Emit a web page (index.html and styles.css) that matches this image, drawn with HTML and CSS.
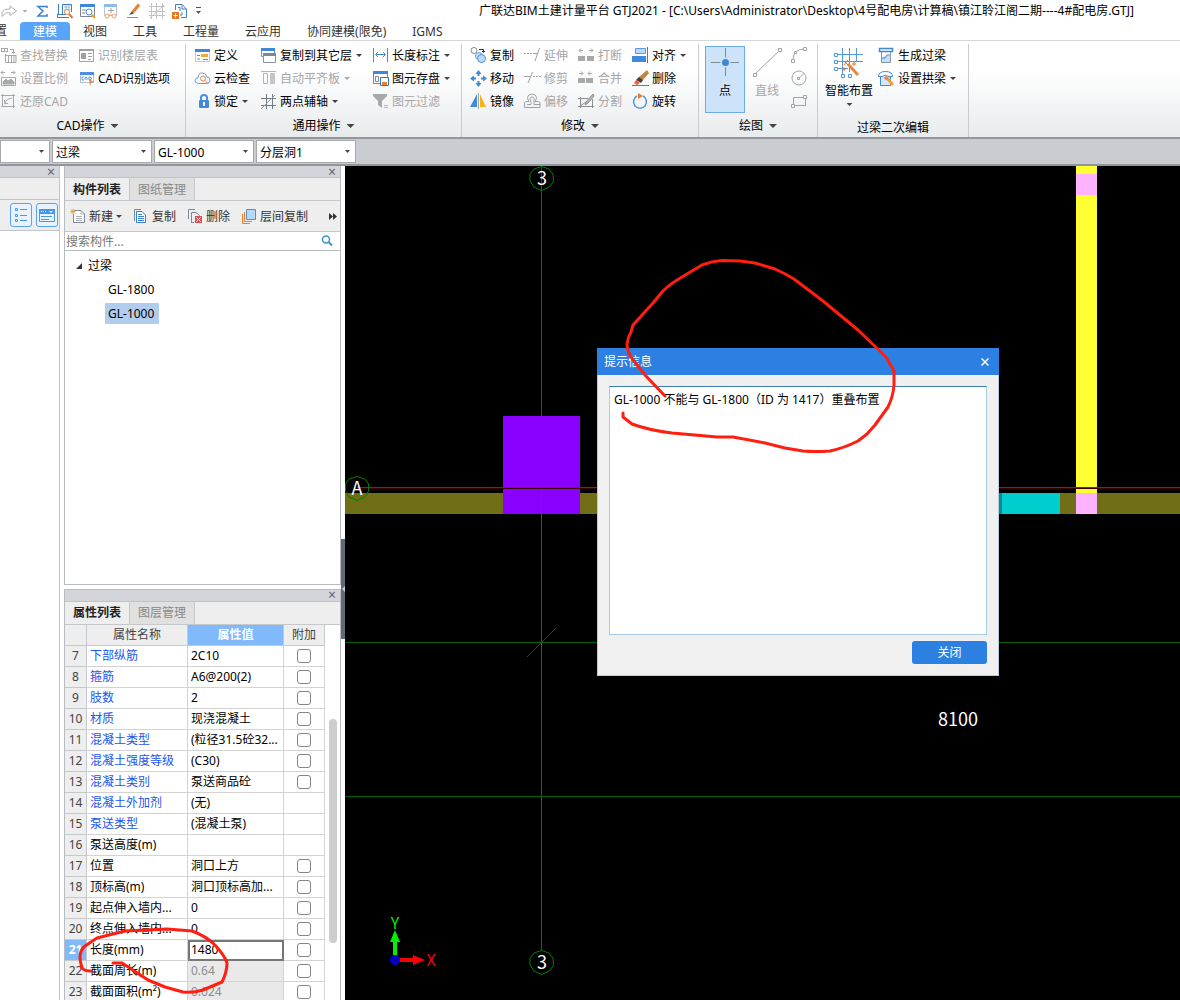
FILE: index.html
```
<!DOCTYPE html>
<html lang="zh-CN">
<head>
    <meta charset="UTF-8">
    <meta name="viewport" content="width=device-width, initial-scale=1.0">
    <title>广联达BIM土建计量平台 GTJ2021</title>
    <link rel="stylesheet" href="styles.css">
</head>
<body>
    <header class="titlebar">
        <div class="quick">
            <button aria-label="重做"><svg width="16" height="16" viewBox="0 0 16 16" fill="none" stroke="#b0b0b0"><path d="M1 13.500V10Q2 6 9 6V3L15.500 8L9 12.500V9.500Q4 9 1 13.500Z"/></svg></button>
            <button aria-label="更多"><span class="arrow light"></span></button>
            <button class="sigma" aria-label="汇总计算"><svg width="16" height="16" viewBox="0 0 16 16" fill="none" stroke="#3b82d4" stroke-width="1.500"><path d="M13 5V3.500H4L9 8L4 13H13V11"/></svg></button>
            <button aria-label="查看工程量"><svg width="16" height="16" viewBox="0 0 16 16" fill="none" stroke="#3b7fcc"><path d="M1.500 1V11H0.500V14.500H12M5.500 11V1.500H14.500V9M1 11.500H9"/><path d="M7 4H13M7 7H13M9 2V9M12 2V7" stroke="#9bb8d8"/><circle cx="10" cy="9" r="2.500" fill="#fff" stroke="#e58b4a"/><path d="M12 11L15.500 15" stroke="#d9783c" stroke-width="2"/></svg></button>
            <button aria-label="查看计算式"><svg width="16" height="16" viewBox="0 0 16 16" fill="none"><path d="M0.500 1.500H14.500V13.500H0.500Z" fill="#fff" stroke="#7b8794"/><path d="M0 1H15V4H0Z" fill="#3f87d9"/><path d="M2 7H6M2 10H5" stroke="#7b8794"/><circle cx="9" cy="9" r="3" fill="#fff" stroke="#4a8fdb"/><path d="M11.500 11.500L15 15" stroke="#f0a030" stroke-width="2"/></svg></button>
            <button aria-label="查看三维"><svg width="16" height="16" viewBox="0 0 16 16" fill="none"><path d="M1.500 1.500H13.500V12.500H1.500Z" fill="#fff" stroke="#b7c3d0"/><path d="M1 1H14V4H1Z" fill="#8fbbe8"/><path d="M5 7.500H11M8 5V10" stroke="#9aa5b1"/><circle cx="4" cy="13" r="2" fill="#fff" stroke="#f0a070"/><circle cx="11" cy="13" r="2" fill="#fff" stroke="#f0a070"/><path d="M6 12H9" stroke="#f0a070"/></svg></button>
            <button aria-label="画笔"><svg width="16" height="16" viewBox="0 0 16 16" fill="none"><path d="M13 1.500L7 9" stroke="#ee7d2e" stroke-width="3"/><path d="M6 8L3 12L8 10.500Z" fill="#555"/><path d="M1 14.500H12" stroke="#8a8f95"/></svg></button>
            <button aria-label="网格"><svg width="16" height="16" viewBox="0 0 16 16" fill="none" stroke="#c2c2c2"><path d="M0 3.500H16M0 8.500H16M0 12.500H16M2.500 0V16M7.500 0V16M13.500 0V16M1 15L15 2"/></svg></button>
            <button aria-label="导入"><svg width="16" height="16" viewBox="0 0 16 16" fill="none"><path d="M3.500 7V1.500H10L14.500 6V14.500H9" stroke="#3f7fc8"/><path d="M10 1.500V6H14" stroke="#3f7fc8"/><path d="M6 4.500H8V8M10 9V12H8" stroke="#3f7fc8"/><path d="M0 9H7V16H0Z" fill="#ed7422"/><path d="M3.500 10.500V14.500M1.500 12.500H5.500" stroke="#fff"/></svg></button>
            <button aria-label="自定义"><svg width="8" height="8" viewBox="0 0 8 8"><path d="M1 0.500H6" stroke="#555"/><path d="M1 4H6L3.500 7Z" fill="#555"/></svg></button>
        </div>
        <h1>广联达BIM土建计量平台 GTJ2021 - [C:\Users\Administrator\Desktop\4号配电房\计算稿\镇江聆江阁二期----4#配电房.GTJ]</h1>
    </header>

    <nav class="tabs">
        <button class="cut">置</button>
        <button class="active">建模</button>
        <button>视图</button>
        <button>工具</button>
        <button>工程量</button>
        <button>云应用</button>
        <button>协同建模(限免)</button>
        <button>IGMS</button>
    </nav>

    <section class="ribbon">
        <div class="group group-cad">
            <div class="tools">
                <div class="col">
                    <button disabled><svg class="icon" viewBox="0 0 17 17" fill="none" stroke="#a8a8a8"><path d="M1 1.500H8M1 4.500H8M1.500 1V5M4.500 1V5M7.500 1V5M10 2.500H13.500V6M12 5L13.500 6.500L15 5M5.500 8.500H16M5.500 7V15.500H16V7.500M8.500 8V15M11.500 8V15M14 8V15"/></svg>查找替换</button>
                    <button disabled><svg class="icon" viewBox="0 0 17 17" fill="none" stroke="#a8a8a8"><path d="M1 2.500H5M3 0.500L1 2.500L3 4.500M11 2.500H15M13 0.500L15 2.500L13 4.500M1.500 7.500H15.500V15.500H1.500Z"/><path d="M3 14V12L6 9L8 11L11 9L14 12V14Z" fill="#a8a8a8"/></svg>设置比例</button>
                    <button disabled><svg class="icon" viewBox="0 0 17 17" fill="none" stroke="#a8a8a8"><path d="M1 2.500H15M2.500 1V14M1 13.500H15M13.500 1V15M5 10Q6 6 12 5M4.500 7V10.500H8"/></svg>还原CAD</button>
                </div>
                <div class="col">
                    <button disabled><svg class="icon" viewBox="0 0 17 17" fill="none" stroke="#a0a0a0"><path d="M1.500 2.500H15.500V14.500H1.500Z"/><path d="M1 2H16V4H1ZM3 6H8V12H3Z" fill="#a0a0a0" stroke="none"/><path d="M10 6.500H14M10 9.500H14M10 12.500H13"/></svg>识别楼层表</button>
                    <button><svg class="icon" viewBox="0 0 17 17" fill="none"><path d="M2.500 2.500H15.500V12.500H2.500Z" fill="#fff" stroke="#b3bfcc"/><path d="M2 2H16V5H2Z" fill="#4a90e2"/><path d="M6 7H4V10H6M7 10V8L8 7L9 8V10M11 7V10H12L14 8.500L12 7Z" stroke="#5a9be0"/><path d="M11 9L16 12L13 13L12 16Z" fill="#ee8258"/></svg>CAD识别选项</button>
                </div>
            </div>
            <button class="label">CAD操作<span class="arrow big"></span></button>
        </div>

        <div class="group group-common">
            <div class="tools">
                <div class="col">
                    <button><svg class="icon" viewBox="0 0 17 17" fill="none"><path d="M1.500 2.500H15.500V14.500H1.500Z" fill="#fff" stroke="#c4c8cd"/><path d="M1 2H16V5H1Z" fill="#3f87d9"/><path d="M3 8.500H6M3 12H6M9 12.500H14" stroke="#7d8790"/><path d="M7 7H14V10H7Z" fill="#f5a83c"/></svg>定义</button>
                    <button><svg class="icon" viewBox="0 0 17 17" fill="none" stroke="#5d9fe6"><path d="M4.500 13.500Q1 13 1 10.500Q1 8 4 8Q4 3 8.500 3Q12 3 13 7Q16 7 16 10.500Q16 13.500 12 13.500Z"/><circle cx="9" cy="8.500" r="2.500" stroke="#e88a50"/><path d="M11 10.500L14 14" stroke="#e88a50"/></svg>云检查</button>
                    <button><svg class="icon" viewBox="0 0 17 17" fill="none"><path d="M7 8V4.500Q7 2 10 2T13 4.500V8" stroke="#4a90e2" stroke-width="2"/><rect x="5" y="7" width="10" height="8" rx="1" fill="#4189dd"/><path d="M10 9V13" stroke="#fff" stroke-width="2"/></svg>锁定<span class="arrow"></span></button>
                </div>
                <div class="col">
                    <button><svg class="icon" viewBox="0 0 17 17" fill="none"><path d="M1.500 1.500H14.500V9.500H1.500Z" fill="#fff" stroke="#5b97dc"/><path d="M1 1H15V4H1Z" fill="#3f87d9"/><path d="M3.500 6.500H15.500V15.500H3.500Z" fill="#fff" stroke="#87939e"/><path d="M3 6H16V9H3Z" fill="#7c8994"/></svg>复制到其它层<span class="arrow"></span></button>
                    <button disabled><svg class="icon" viewBox="0 0 17 17" fill="none" stroke="#b5b5b5"><path d="M1 1.500H16M3.500 3.500H7.500V13.500H3.500Z"/><path d="M10 3H15V14H10Z" fill="#c6c6c6" stroke="none"/></svg>自动平齐板<span class="arrow light"></span></button>
                    <button><svg class="icon" viewBox="0 0 17 17" fill="none" stroke="#6f7a84"><path d="M6.500 1V16M12.500 1V16M1 5.500H16M1 12.500H16"/><path d="M1 16L15 2" stroke="#ed8540"/></svg>两点辅轴<span class="arrow"></span></button>
                </div>
                <div class="col">
                    <button><svg class="icon" viewBox="0 0 17 17" fill="none"><path d="M1.500 1V15M15.500 1V15" stroke="#74808b"/><path d="M4 7.500H13M6 5L3.500 7.500L6 10M11 5L13.500 7.500L11 10" stroke="#3f87d9"/></svg>长度标注<span class="arrow"></span></button>
                    <button><svg class="icon" viewBox="0 0 17 17" fill="none"><path d="M1.500 2.500H15.500V13.500H1.500Z" fill="#fff" stroke="#78848e"/><path d="M1 1H16V4H1Z" fill="#3f87d9"/><path d="M3.500 6.500H6.500V11.500H3.500Z" stroke="#7c8994"/><path d="M8.500 7.500H16.500V15.500H8.500Z" fill="#fff" stroke="#2f78ca"/><path d="M10 12H15V15H10Z" fill="#ed7c31"/></svg>图元存盘<span class="arrow"></span></button>
                    <button disabled><svg class="icon" viewBox="0 0 17 17"><path d="M1 1H15V3L10 8V15L6 12V8L1 3Z" fill="#a8a8a8"/><path d="M12 12.500H16M12 14.500H16" stroke="#b8b8b8"/></svg>图元过滤</button>
                </div>
            </div>
            <button class="label">通用操作<span class="arrow big"></span></button>
        </div>

        <div class="group group-edit">
            <div class="tools">
                <div class="col">
                    <button><svg class="icon" viewBox="0 0 17 17" fill="none"><circle cx="4" cy="3.500" r="3" stroke="#7c8790"/><path d="M9 2.500H13.500V5M12 4L13.500 5.500L15 4" stroke="#333"/><circle cx="9" cy="9" r="3.500" fill="#cfe6fb" stroke="#6f9dc8"/><circle cx="11.500" cy="11.500" r="4" fill="#b9dcfa" stroke="#4a90d6"/></svg>复制</button>
                    <button><svg class="icon" viewBox="0 0 17 17" fill="#3f87d9"><path d="M8.500 0L11.500 4H9.500V6H7.500V4H5.500ZM8.500 17L11.500 13H9.500V11H7.500V13H5.500ZM0 8.500L4 5.500V7.500H6V9.500H4V11.500ZM17 8.500L13 5.500V7.500H11V9.500H13V11.500Z"/></svg>移动</button>
                    <button><svg class="icon" viewBox="0 0 17 17"><path d="M7 1V14H0Z" fill="#4189dd"/><path d="M10 1V14H16Z" fill="#f9b21c"/><path d="M8.500 0V16" stroke="#9ba5ae"/></svg>镜像</button>
                </div>
                <div class="col">
                    <button disabled><svg class="icon" viewBox="0 0 17 17" fill="none" stroke="#a0a0a0"><path d="M0 6.500H10" stroke-dasharray="2 1"/><path d="M15.500 1L11 14M10 6.500H13"/></svg>延伸</button>
                    <button disabled><svg class="icon" viewBox="0 0 17 17" fill="none" stroke="#a0a0a0"><path d="M9 6.500H17" stroke-dasharray="2 1"/><path d="M8.500 2L4 13M0 6.500H6"/></svg>修剪</button>
                    <button disabled><svg class="icon" viewBox="0 0 17 17" fill="none" stroke="#a0a0a0"><path d="M0.500 14.500V9.500Q1 8.500 5 8.500Q3.500 6 3.500 4.500Q4 1 8 1T12.500 4.500Q12.500 6 11 8.500Q16 8 16 10V14.500ZM3 11.500H7V9Q6 7 6 5.500Q6.500 4 8 4T10 5.500V11.500H16"/></svg>偏移</button>
                </div>
                <div class="col">
                    <button disabled><svg class="icon" viewBox="0 0 17 17" fill="none" stroke="#a8a8a8"><path d="M1 3.500H5M3 1.500L1 3.500L3 5.500M11 3.500H15M13 1.500L15 3.500L13 5.500"/><path d="M0 9H7V14H0ZM9 9H16V14H9Z" fill="#a8a8a8" stroke="none"/></svg>打断</button>
                    <button disabled><svg class="icon" viewBox="0 0 17 17" fill="none" stroke="#a8a8a8"><path d="M1 3.500H5M3 1.500L5 3.500L3 5.500M10 3.500H14M12 1.500L10 3.500L12 5.500"/><path d="M0 8H7V13H0ZM8 8H15V13H8Z" fill="#a8a8a8" stroke="none"/></svg>合并</button>
                    <button disabled><svg class="icon" viewBox="0 0 17 17" fill="none" stroke="#909090"><path d="M0 5.500H10M2.500 4V15M0 13.500H16M14.500 6V15M2 13L8 9"/><path d="M15 1L8 9L7 12L10 10L16 3Z" fill="#b5b5b5"/></svg>分割</button>
                </div>
                <div class="col">
                    <button><svg class="icon" viewBox="0 0 17 17" fill="none"><path d="M3.500 1.500H13.500V6.500H3.500Z" fill="#b9dafb" stroke="#5a9ae0"/><path d="M0 9H14V15H0Z" fill="#4189dd"/><path d="M15.500 0V16" stroke="#68737e"/></svg>对齐<span class="arrow"></span></button>
                    <button><svg class="icon" viewBox="0 0 17 17"><path d="M15 0L17 3L10 11L6 8Z" fill="#c78342"/><path d="M7 7L11 10L9 13L4 10Z" fill="#4c4039"/><path d="M4 10L8 13L5 15L2 13Z" fill="#e8643c"/><path d="M0 15.500H17" stroke="#777"/></svg>删除</button>
                    <button><svg class="icon" viewBox="0 0 17 17" fill="none"><path d="M11 3A6.500 6.500 0 1 1 5 3" stroke="#4f94e0" stroke-width="1.500"/><path d="M6 0L11 3L6 6Z" fill="#ee7a31"/></svg>旋转</button>
                </div>
            </div>
            <button class="label">修改<span class="arrow big"></span></button>
        </div>

        <div class="group group-draw">
            <div class="tools">
                <button class="large selected"><svg width="30" height="32" viewBox="0 0 30 32"><path d="M15.500 1V29M1 15.500H29" stroke="#7f8a94"/><circle cx="15.500" cy="15.500" r="5" fill="#cde4fa"/><circle cx="15.500" cy="15.500" r="3.500" fill="#3f87d9"/></svg>点</button>
                <button class="large" disabled><svg width="30" height="32" viewBox="0 0 30 32" fill="none" stroke="#a3a3a3"><path d="M4 26L26 5"/><path d="M1.500 26.500H4.500V29.500H1.500ZM26.500 1.500H29.500V4.500H26.500Z"/></svg>直线</button>
                <div class="col">
                    <button disabled aria-label="圆弧"><svg class="icon" viewBox="0 0 17 17" fill="none" stroke="#a3a3a3"><path d="M2 13Q2 2 14 2"/><path d="M0.500 12.500H3.500V15.500H0.500ZM12.500 0.500H15.500V3.500H12.500ZM3.500 4.500H5.500V6.500H3.500Z" fill="#fff"/></svg></button>
                    <button disabled aria-label="圆"><svg class="icon" viewBox="0 0 17 17" fill="none" stroke="#a3a3a3"><circle cx="8" cy="8" r="7"/><path d="M6.500 7.500H8.500V9.500H6.500ZM9 7.500L12.500 4"/></svg></button>
                    <button disabled aria-label="矩形"><svg class="icon" viewBox="0 0 17 17" fill="none" stroke="#a3a3a3"><path d="M2.500 4.500H14.500V12.500H2.500Z"/><path d="M0.500 11.500H3.500V14.500H0.500ZM12.500 2.500H15.500V5.500H12.500Z" fill="#fff"/></svg></button>
                </div>
            </div>
            <button class="label">绘图<span class="arrow big"></span></button>
        </div>

        <div class="group group-lintel">
            <div class="tools">
                <button class="large"><svg width="30" height="32" viewBox="0 0 30 32" fill="none" stroke="#5297e2"><path d="M8.500 1V27M15.500 1V25M22.500 1V14M3 7.500H29M3 14.500H29M3 21.500H14"/><path d="M0.500 6.500H3.500V9.500H0.500ZM0.500 13.500H3.500V16.500H0.500ZM0.500 20.500H3.500V23.500H0.500ZM7.500 27.500H10.500V30.500H7.500ZM14.500 27.500H17.500V30.500H14.500Z" fill="#fff"/><path d="M14 17L24 28" stroke="#de8b4a" stroke-width="3"/><path d="M10 14L14 18M14 13L10 18M8 22H12M10 20V24M18 17H22M20 15V19" stroke="#ef6f2c"/></svg>智能布置<span class="arrow"></span></button>
                <div class="col">
                    <button><svg class="icon" viewBox="0 0 17 17" fill="none"><path d="M3.500 4V15.500H12.500V4" fill="#fff" stroke="#8b97a2"/><path d="M4 11Q8 7 12 9V15H4Z" fill="#c4dffa"/><path d="M1.500 1.500H14.500V4.500H1.500Z" fill="#fff" stroke="#3f87d9" stroke-width="1.500"/><path d="M4 11H7L9 8H12" stroke="#3f87d9"/></svg>生成过梁</button>
                    <button><svg class="icon" viewBox="0 0 17 17" fill="none"><path d="M2.500 7V15.500H12.500V7" fill="#d5e8fb" stroke="#3f87d9"/><path d="M0.500 6.500Q0.500 1.500 7.500 1.500T14.500 6.500H11Q7.500 4 4 6.500Z" fill="#fff" stroke="#3f87d9"/><path d="M9 8L15 15" stroke="#eea13d" stroke-width="3"/><path d="M6 8H10M8 6V10" stroke="#e85f2a"/></svg>设置拱梁<span class="arrow"></span></button>
                </div>
            </div>
            <div class="label">过梁二次编辑</div>
        </div>
    </section>

    <section class="selectors">
        <div class="combo combo-first"><select aria-label="楼层"><option></option></select></div>
        <div class="combo"><select aria-label="构件类型"><option>过梁</option></select></div>
        <div class="combo"><select aria-label="构件"><option>GL-1000</option></select></div>
        <div class="combo"><select aria-label="分层"><option>分层洞1</option></select></div>
    </section>

    <main class="workspace">
        <aside class="side-left">
            <div class="strip"><button class="close" aria-label="关闭">×</button></div>
            <div class="side-head"></div>
            <div class="view-modes">
                <button aria-label="列表"><svg width="14" height="16" viewBox="0 0 14 16" fill="none" stroke="#4496ee"><path d="M1.500 1.500H3.500V3.500H1.500ZM1.500 7.500H3.500V9.500H1.500ZM1.500 12.500H3.500V14.500H1.500ZM6 2.500H13M6 8.500H13M6 13.500H13"/></svg></button>
                <button aria-label="卡片"><svg width="16" height="16" viewBox="0 0 16 16" fill="none"><path d="M0.500 2.500H15.500V14.500H0.500Z" stroke="#4496ee"/><path d="M0 2H16V7H0Z" fill="#4496ee"/><path d="M2 4.500H8" stroke="#fff" stroke-dasharray="1 1"/><path d="M10 4H14L12 6Z" fill="#fff"/><path d="M2 9.500H13M2 12.500H10" stroke="#4496ee"/></svg></button>
            </div>
        </aside>

        <div class="docks">
            <section class="panel panel-components">
                <div class="strip"><button class="close" aria-label="关闭">×</button></div>
                <div class="panel-tabs">
                    <button class="active">构件列表</button>
                    <button>图纸管理</button>
                </div>
                <div class="toolbar">
                    <button><svg class="icon" viewBox="0 0 17 17" fill="none"><path d="M4.500 2.500H11L14.500 6V14.500H3.500V6" fill="#fff" stroke="#7d8994"/><path d="M11 2.500V6H14M6 8.500H12M6 10.500H12M6 12.500H12" stroke="#a9b2ba"/><path d="M3 1V6M0.500 3.500H5.500M1 1.500L5 5.500M5 1.500L1 5.500" stroke="#f0a024"/></svg>新建<span class="arrow"></span></button>
                    <button><svg class="icon" viewBox="0 0 17 17" fill="none"><path d="M1.500 13V1.500H8" stroke="#7d8994"/><path d="M3.500 3.500H9L12.500 7V14.500H3.500Z" fill="#fff" stroke="#3a7fcc"/><path d="M5 6.500H9M5 8.500H11M5 10.500H11M5 12.500H11" stroke="#3a7fcc"/></svg>复制</button>
                    <button><svg class="icon" viewBox="0 0 17 17" fill="none"><path d="M1.500 11V1.500H8M4.500 14.500V4.500H9L12.500 7.500V8M4 14.500H7" stroke="#7d8994"/><path d="M8 8H15V15H8Z" fill="#d8505a"/><path d="M9.500 9.500L13.500 13.500M13.500 9.500L9.500 13.500" stroke="#fff"/></svg>删除</button>
                    <button><svg class="icon" viewBox="0 0 17 17" fill="none"><path d="M1.500 6V15.500H9M3.500 4V13.500H11" stroke="#ed7b30"/><path d="M5.500 1.500H14.500V11.500H5.500Z" fill="#b9d9fa" stroke="#4a90dd"/></svg>层间复制</button>
                    <button class="more" aria-label="更多"><svg width="8" height="7" viewBox="0 0 8 7" fill="#333"><path d="M0 0L4 3.500L0 7ZM4 0L8 3.500L4 7Z"/></svg></button>
                </div>
                <div class="search">
                    <input type="text" aria-label="搜索构件" placeholder="搜索构件...">
                    <svg width="12" height="12" viewBox="0 0 12 12" fill="none" stroke="#3c92c8"><circle cx="5" cy="4.500" r="3.500" stroke-width="1.500"/><path d="M7.500 7L11 10.500" stroke-width="2"/></svg>
                </div>
                <ul class="tree">
                    <li><svg width="8" height="8" viewBox="0 0 8 8"><path d="M7 1V7H1Z" fill="#333"/></svg>过梁
                        <ul>
                            <li><span>GL-1800</span></li>
                            <li><span class="selected">GL-1000</span></li>
                        </ul>
                    </li>
                </ul>
            </section>

            <section class="panel panel-props">
                <div class="strip"><button class="close" aria-label="关闭">×</button></div>
                <div class="panel-tabs">
                    <button class="active">属性列表</button>
                    <button>图层管理</button>
                </div>
                <div class="props">
                    <table>
                        <thead>
                            <tr><th class="num"></th><th class="name">属性名称</th><th class="value current">属性值</th><th class="extra">附加</th></tr>
                        </thead>
                        <tbody>
                            <tr><th>7</th><td class="blue">下部纵筋</td><td>2C10</td><td class="check"><input type="checkbox" aria-label="附加 下部纵筋"></td></tr>
                            <tr><th>8</th><td class="blue">箍筋</td><td>A6@200(2)</td><td class="check"><input type="checkbox" aria-label="附加 箍筋"></td></tr>
                            <tr><th>9</th><td class="blue">肢数</td><td>2</td><td class="check"><input type="checkbox" aria-label="附加 肢数"></td></tr>
                            <tr><th>10</th><td class="blue">材质</td><td>现浇混凝土</td><td class="check"><input type="checkbox" aria-label="附加 材质"></td></tr>
                            <tr><th>11</th><td class="blue">混凝土类型</td><td>(粒径31.5砼32...</td><td class="check"><input type="checkbox" aria-label="附加 混凝土类型"></td></tr>
                            <tr><th>12</th><td class="blue">混凝土强度等级</td><td>(C30)</td><td class="check"><input type="checkbox" aria-label="附加 混凝土强度等级"></td></tr>
                            <tr><th>13</th><td class="blue">混凝土类别</td><td>泵送商品砼</td><td class="check"><input type="checkbox" aria-label="附加 混凝土类别"></td></tr>
                            <tr><th>14</th><td class="blue">混凝土外加剂</td><td>(无)</td><td></td></tr>
                            <tr><th>15</th><td class="blue">泵送类型</td><td>(混凝土泵)</td><td></td></tr>
                            <tr><th>16</th><td>泵送高度(m)</td><td></td><td></td></tr>
                            <tr><th>17</th><td>位置</td><td>洞口上方</td><td class="check"><input type="checkbox" aria-label="附加 位置"></td></tr>
                            <tr><th>18</th><td>顶标高(m)</td><td>洞口顶标高加...</td><td class="check"><input type="checkbox" aria-label="附加 顶标高"></td></tr>
                            <tr><th>19</th><td>起点伸入墙内...</td><td>0</td><td class="check"><input type="checkbox" aria-label="附加 起点伸入墙内"></td></tr>
                            <tr><th>20</th><td>终点伸入墙内...</td><td>0</td><td class="check"><input type="checkbox" aria-label="附加 终点伸入墙内"></td></tr>
                            <tr><th class="current">21</th><td>长度(mm)</td><td class="editing">1480</td><td class="check"><input type="checkbox" aria-label="附加 长度"></td></tr>
                            <tr><th>22</th><td>截面周长(m)</td><td class="readonly">0.64</td><td class="check"><input type="checkbox" aria-label="附加 截面周长"></td></tr>
                            <tr><th>23</th><td>截面面积(m²)</td><td class="readonly">0.024</td><td class="check"><input type="checkbox" aria-label="附加 截面面积"></td></tr>
                        </tbody>
                    </table>
                    <div class="scrollbar"><div class="thumb"></div></div>
                </div>
            </section>
        </div>

        <div class="splitter">
            <button aria-label="折叠"><svg width="3" height="6" viewBox="0 0 3 6"><path d="M3 0V6L0 3Z" fill="#c3c9cf"/></svg></button>
        </div>

        <div class="canvas">
            <svg class="drawing" width="100%" height="100%">
                <!-- walls, columns and openings -->
                <g shape-rendering="crispEdges">
                    <rect x="0" y="327" width="100%" height="21" fill="#706f17"/>
                    <rect x="650" y="327" width="65" height="21" fill="#008f8f"/>
                    <rect x="657" y="327" width="58" height="21" fill="#00cdcd"/>
                    <rect x="731" y="0" width="21" height="327" fill="#ffff33"/>
                    <rect x="731" y="8" width="21" height="21" fill="#ffb3ff"/>
                    <rect x="731" y="327" width="21" height="21" fill="#ffb3ff"/>
                    <rect x="158" y="250" width="77" height="98" fill="#8a00ff"/>
                </g>
                <!-- axis grid -->
                <g shape-rendering="crispEdges" fill="none" stroke-width="1">
                    <path d="M196.500 1V322" stroke="#e60000"/>
                    <path d="M196.500 322V784" stroke="#008000"/>
                    <path d="M12 322.500H4000" stroke="#3c0000"/>
                    <path d="M12 321.500H4000" stroke="#d00000"/>
                    <path d="M0 476.500H4000M0 630.500H4000" stroke="#006400"/>
                </g>
                <path d="M182 491L211 462" stroke="#006400"/>
                <g fill="none" stroke="#008000">
                    <path d="M196.500 0.500L204 3L208 8L208.500 15L204.500 21L196.500 24.500L189 21L185 15V8L189 3Z"/>
                    <path d="M196.500 784.500L204 787L208 792L208.500 799L204.500 805L196.500 808.500L189 805L185 799V792L189 787Z"/>
                    <path d="M12 310.500L20 313L23.500 318V325L20 331L12 334.500L4 331L0.500 325V318L4 313Z"/>
                </g>
                <g class="axis-text">
                    <text x="197" y="19">3</text>
                    <text x="197" y="803">3</text>
                    <text x="12" y="329">A</text>
                    <text x="613" y="560">8100</text>
                    <text class="axis-y" x="50" y="763">Y</text>
                    <text class="axis-x" x="86" y="800">X</text>
                </g>
                <!-- coordinate tripod -->
                <path d="M50 794V776" stroke="#00f000" stroke-width="4"/>
                <path d="M50 764L55 776H45Z" fill="#00f000"/>
                <path d="M50 794H70" stroke="#f00" stroke-width="4"/>
                <path d="M80 794L68 789V799Z" fill="#f00"/>
                <circle cx="50" cy="794" r="5" fill="#0000c8"/>
            </svg>

            <div class="dialog" role="dialog" aria-labelledby="dialog-title">
                <div class="dialog-title">
                    <h2 id="dialog-title">提示信息</h2>
                    <button aria-label="关闭"><svg width="8" height="8" viewBox="0 0 8 8" stroke="#fff" stroke-width="1.500"><path d="M0.500 0.500L7.500 7.500M7.500 0.500L0.500 7.500"/></svg></button>
                </div>
                <div class="dialog-body">
                    <div class="message">GL-1000 不能与 GL-1800（ID 为 1417）重叠布置</div>
                    <button class="primary">关闭</button>
                </div>
            </div>
        </div>
    </main>

    <!-- freehand marks over the window -->
    <svg class="marks" width="1180" height="1000" viewBox="0 0 1180 1000">
        <path d="M665 396L645 375L631 357Q627 350 627 344Q628 337 631 332L633 325L643 314L653 303L663 291Q670 284 682 277L702 265Q712 261 722 260.500L740 261L755 263L775 269Q786 274 794 279L823 301L858 330L886 357L894 371V385Q893 397 888 407L875 425L867 434L858 441Q844 448 830 451Q815 452 803 451L785 448L765 443L733 437H717L672 433Q648 430 632 424L623 417V413"/>
        <path d="M91 971Q84 971 82 968Q80 962 80 957Q80 950 85 946L97 938L125 931L167 929L192 931Q206 936 215 945Q225 956 227 963Q227 972 222 982L203 990Q193 993 183 992L165 987L148 980L122 963H113"/>
    </svg>
</body>
</html>
```
FILE: styles.css
```
* {
    box-sizing: border-box;
}
body {
    display: flex;
    flex-direction: column;
    height: 100vh;
    margin: 0;
    overflow: hidden;
    background-color: #fff;
    color: #000;
    font-family: "Noto Sans", "Noto Sans CJK SC", sans-serif;
    font-size: 12px;
    line-height: 16px;
}
button,
input,
select {
    margin: 0;
    padding: 0;
    border: 0;
    background: none;
    color: inherit;
    font: inherit;
    white-space: nowrap;
}
svg {
    flex-shrink: 0;
}
h1, h2 {
    margin: 0;
    font-size: 12px;
    font-weight: normal;
}
.icon {
    width: 17px;
    height: 17px;
}
.arrow {
    width: 6px;
    height: 3px;
    margin-left: 1px;
    background-color: #444;
    clip-path: polygon(0 0, 100% 0, 50% 100%);
}
.arrow.big {
    width: 8px;
    height: 4px;
    margin-left: 3px;
}
.arrow.light {
    background-color: #aaa;
}

/* title bar */
.titlebar {
    display: flex;
    align-items: center;
    height: 22px;
}
.quick {
    display: flex;
    align-items: center;
    gap: 7px;
    padding-left: 1px;
}
.quick button {
    display: flex;
}
.quick .arrow {
    margin-left: -2px;
}
.quick .sigma {
    margin-left: -1px;
}
.titlebar h1 {
    flex: 1;
    padding-right: 24px;
    text-align: right;
    white-space: nowrap;
}
.titlebar h1 {
    padding-right: 46px;
}

/* ribbon */
.tabs {
    display: flex;
    height: 19px;
    border-bottom: 1px solid #d5d7d9;
    color: #333;
}
.tabs button {
    padding: 1px 13px 0;
}
.tabs .cut {
    display: flex;
    justify-content: flex-end;
    width: 20px;
    padding-left: 0;
}
.tabs .active {
    border-radius: 4px 4px 0 0;
    background-color: #57a5f8;
    color: #fff;
}
.ribbon {
    display: flex;
    height: 98px;
    padding-top: 3px;
    border-bottom: 2px solid #92969a;
    background: linear-gradient(#fff 30%, #e8ebed);
}
.group {
    display: flex;
    flex-direction: column;
    padding: 0 8px;
    border-right: 1px solid #c9cccf;
}
.group-cad {
    width: 186px;
    padding: 0 10px 0 0;
}
.group-common {
    width: 276px;
}
.group-edit {
    width: 237px;
}
.group-draw {
    width: 119px;
    padding: 0 6px;
}
.group-lintel {
    width: 151px;
    padding: 0 6px;
}
.tools {
    display: flex;
    gap: 10px;
    height: 69px;
}
.group-draw .tools {
    gap: 2px;
}
.group-draw .col {
    margin-left: 2px;
}
.group-lintel .tools {
    gap: 4px;
}
.col {
    display: flex;
    flex-direction: column;
}
.col button {
    display: flex;
    align-items: center;
    gap: 3px;
    height: 23px;
}
button:disabled {
    color: #a6a6a6;
}
.large {
    display: flex;
    flex-direction: column;
    align-items: center;
    gap: 4px;
    min-width: 40px;
    height: 67px;
    margin-top: 2px;
    border: 1px solid transparent;
}
.large.selected {
    border-color: #6daaea;
    background-color: #cde3fa;
}
.label {
    display: flex;
    align-items: center;
    justify-content: center;
    gap: 3px;
    height: 24px;
    padding-top: 2px;
}
div.label {
    padding-top: 6px;
}
.selectors {
    display: flex;
    align-items: center;
    gap: 2px;
    height: 27px;
    border-bottom: 2px solid #92969a;
    background-color: #c9ccd1;
}
.combo {
    position: relative;
    width: 100px;
}
.combo-first {
    width: 50px;
}
.combo select {
    display: block;
    width: 100%;
    height: 23px;
    padding: 2px 0 0 3px;
    border: 1px solid #a5a8ac;
    background-color: #fff;
    appearance: none;
}
.combo::after {
    content: "";
    position: absolute;
    top: 10px;
    right: 6px;
    width: 5px;
    height: 3px;
    background-color: #444;
    clip-path: polygon(0 0, 100% 0, 50% 100%);
}

/* docked panels */
.workspace {
    display: flex;
    flex: 1;
    min-height: 0;
}
.strip {
    display: flex;
    flex-shrink: 0;
    align-items: center;
    justify-content: flex-end;
    height: 12px;
    padding-right: 4px;
    border-bottom: 1px solid #bfc3c9;
    background-color: #d3d5da;
}
.close {
    color: #666;
    font-size: 14px;
    line-height: 12px;
}
.side-left {
    width: 60px;
    border-right: 1px solid #c1c5cb;
}
.side-head {
    height: 22px;
    border-bottom: 1px solid #c1c5cb;
    background-color: #eee;
}
.view-modes {
    display: flex;
    align-items: center;
    justify-content: flex-end;
    gap: 4px;
    height: 31px;
    padding-right: 1px;
    border-bottom: 1px solid #c1c5cb;
    background-color: #eee;
}
.view-modes button {
    display: flex;
    align-items: center;
    justify-content: center;
    width: 22px;
    height: 24px;
    border: 1px solid #58a4f4;
    border-radius: 3px;
    background-color: #e9f3fd;
}
.docks {
    display: flex;
    flex-direction: column;
    gap: 4px;
    width: 277px;
    margin-left: 4px;
}
.panel {
    display: flex;
    flex-direction: column;
    min-height: 0;
    border: 1px solid #b8bbbf;
    border-top-width: 0;
}
.panel-components {
    flex: 419;
}
.panel-props {
    flex: 411;
    border-top-width: 1px;
    border-bottom: 0;
}
.panel-tabs {
    display: flex;
    flex-shrink: 0;
    height: 23px;
    border-bottom: 1px solid #c5c8cd;
    background-color: #eee;
}
.panel-tabs button {
    width: 65px;
    padding-top: 1px;
    border-right: 1px solid #c5c8cd;
    background-color: #e0e0e0;
    color: #888;
}
.panel-tabs .active {
    background-color: #eee;
    color: #222;
    font-weight: bold;
}
.toolbar {
    display: flex;
    flex-shrink: 0;
    align-items: center;
    gap: 11px;
    height: 31px;
    padding: 1px 3px 0 5px;
    border-bottom: 1px solid #c5c8cd;
    background-color: #eee;
    color: #333;
}
.toolbar button {
    display: flex;
    align-items: center;
    gap: 2px;
}
.toolbar .more {
    margin-left: auto;
}
.search {
    display: flex;
    flex-shrink: 0;
    align-items: center;
    height: 19px;
    padding-right: 7px;
    border-bottom: 1px solid #b8bbbf;
}
.search input {
    flex: 1;
    padding: 2px 0 0 1px;
    outline: 0;
}
.search input::placeholder {
    color: #777;
}
.tree,
.tree ul {
    margin: 0;
    padding: 0;
    list-style: none;
}
.tree {
    padding: 3px 10px;
    line-height: 24px;
}
.tree svg {
    margin-right: 5px;
}
.tree ul {
    padding-left: 30px;
}
.tree span {
    display: inline-block;
    padding: 0 5px 0 3px;
    line-height: 21px;
}
.tree .selected {
    background-color: #b2cced;
}

/* property grid */
.props {
    display: flex;
    flex: 1;
    min-height: 0;
    overflow: hidden;
}
.props table {
    width: 260px;
    height: 378px;
    table-layout: fixed;
    border-spacing: 0;
}
.props th,
.props td {
    height: 21px;
    padding: 0 3px;
    border-right: 1px solid #d3d3d3;
    border-bottom: 1px solid #d3d3d3;
    overflow: hidden;
    text-align: left;
    white-space: nowrap;
}
.props th {
    padding: 0;
    background-color: #eee;
    border-color: #c5c8cd;
    color: #444;
    font-weight: normal;
    text-align: center;
}
.props .num {
    width: 22px;
}
.props .name {
    width: 101px;
}
.props .value {
    width: 96px;
}
.props .current {
    background-color: #80bafb;
    color: #fff;
    font-weight: bold;
}
.props .blue {
    color: #1a56f0;
}
.props .editing {
    outline: 2px solid #777;
    outline-offset: -2px;
}
.props .readonly {
    background-color: #e9e9e9;
    color: #8c8c8c;
}
.props .check {
    text-align: center;
}
.check input {
    display: block;
    width: 14px;
    height: 14px;
    margin: 0 auto;
    border: 1px solid #858585;
    border-radius: 3px;
    background-color: #fff;
    appearance: none;
}
.scrollbar {
    flex: 1;
    padding: 94px 3px 0 4px;
}
.thumb {
    height: 224px;
    border-radius: 4px;
    background-color: #cdcdcd;
}
.splitter {
    display: flex;
    align-items: center;
    width: 4px;
    padding-top: 12px;
}
.splitter button {
    display: flex;
    align-items: center;
    justify-content: flex-end;
    width: 4px;
    height: 100px;
    background-color: #5f6b76;
}

/* model view */
.canvas {
    position: relative;
    flex: 1;
    overflow: hidden;
    background-color: #000;
}
.drawing {
    display: block;
}
.axis-text {
    fill: #fff;
    font-family: "Noto Sans CJK SC", sans-serif;
    font-size: 18px;
    text-anchor: middle;
}
.axis-x,
.axis-y {
    font-size: 16px;
}
.axis-x {
    fill: #f00;
}
.axis-y {
    fill: #00f000;
}
.dialog {
    position: absolute;
    top: 182px;
    left: 252px;
    width: 402px;
    border: 1px solid #b9cde0;
    border-top: 0;
    background-color: #f0f0f0;
}
.dialog-title {
    display: flex;
    align-items: center;
    justify-content: space-between;
    height: 27px;
    margin: 0 -1px;
    padding: 0 10px 0 7px;
    background-color: #2c80e2;
    color: #fff;
}
.dialog-title button {
    display: flex;
}
.dialog-body {
    padding: 11px;
}
.message {
    height: 249px;
    padding: 5px 4px;
    border: 1px solid #a9cbe6;
    border-top-color: #3a7cb0;
    background-color: #fff;
}
.primary {
    display: block;
    width: 75px;
    height: 23px;
    margin: 6px 0 0 auto;
    padding-top: 1px;
    border-radius: 3px;
    background-color: #2c80e2;
    color: #fff;
}
.marks {
    position: absolute;
    top: 0;
    left: 0;
    fill: none;
    stroke: #ff1e10;
    stroke-width: 3;
    stroke-linecap: round;
    stroke-linejoin: round;
    pointer-events: none;
}
```
